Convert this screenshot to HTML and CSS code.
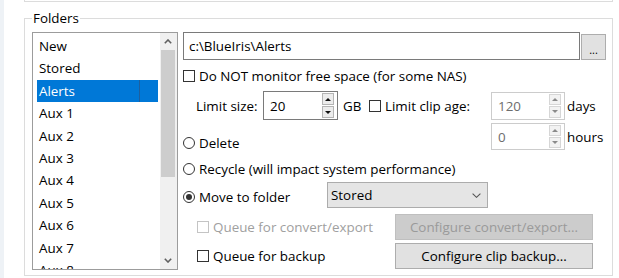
FILE: index.html
```html
<!DOCTYPE html>
<html>
<head>
<meta charset="utf-8">
<link rel="stylesheet" href="styles.css">
</head>
<body>
<div class="page">
  <div class="prev-group"></div>
  <div class="group">
    <span class="legend">Folders</span>
    <div class="group-body">
      <div class="listbox">
        <ul class="items">
          <li>New</li>
          <li>Stored</li>
          <li class="sel"><span class="sel-text">Alerts</span><span class="sel-div"></span></li>
          <li>Aux 1</li>
          <li>Aux 2</li>
          <li>Aux 3</li>
          <li>Aux 4</li>
          <li>Aux 5</li>
          <li>Aux 6</li>
          <li>Aux 7</li>
          <li>Aux 8</li>
        </ul>
        <div class="vscroll">
          <div class="sb-btn"><svg width="8" height="5" viewBox="0 0 8 5"><polyline points="0.8,4.2 4,1 7.2,4.2" fill="none" stroke="#606060" stroke-width="1.6"/></svg></div>
          <div class="sb-thumb"></div>
          <div class="sb-track"></div>
          <div class="sb-btn"><svg width="8" height="5" viewBox="0 0 8 5"><polyline points="0.8,0.8 4,4 7.2,0.8" fill="none" stroke="#606060" stroke-width="1.6"/></svg></div>
        </div>
      </div>

      <div class="panel">
        <div class="path-row">
          <div class="textbox">c:\BlueIris\Alerts</div>
          <div class="btn browse">...</div>
        </div>

        <div class="opt check-top"><span class="cb"></span><span>Do NOT monitor free space (for some NAS)</span></div>

        <div class="limits">
          <div class="limit-left">
            <span class="lbl-size">Limit size:</span>
            <div class="spin spin-size">
              <span class="val">20</span>
              <span class="spin-btns"><span class="sbtn"><span class="tri-up"></span></span><span class="sbtn"><span class="tri-dn"></span></span></span>
            </div>
            <span class="unit-gb">GB</span>
            <div class="opt"><span class="cb"></span><span>Limit clip age:</span></div>
          </div>
          <div class="spin spin-age disabled">
            <span class="val">120</span>
            <span class="spin-btns"><span class="sbtn"><span class="tri-up"></span></span><span class="sbtn"><span class="tri-dn"></span></span></span>
          </div>
          <span class="unit">days</span>

          <div class="opt delete"><span class="radio"></span><span>Delete</span></div>
          <div class="spin spin-hours disabled">
            <span class="val">0</span>
            <span class="spin-btns"><span class="sbtn"><span class="tri-up"></span></span><span class="sbtn"><span class="tri-dn"></span></span></span>
          </div>
          <span class="unit">hours</span>
        </div>

        <div class="opt recycle"><span class="radio"></span><span>Recycle (will impact system performance)</span></div>

        <div class="move-row">
          <div class="opt move-opt"><span class="radio checked"></span><span>Move to folder</span></div>
          <div class="select">
            <span>Stored</span>
            <svg width="9" height="5" viewBox="0 0 9 5"><polyline points="0.6,0.6 4.5,4.3 8.4,0.6" fill="none" stroke="#555" stroke-width="1.1"/></svg>
          </div>
        </div>

        <div class="queue-row convert">
          <div class="opt queue-opt off"><span class="cb"></span><span>Queue for convert/export</span></div>
          <div class="btn wide disabled-btn">Configure convert/export...</div>
        </div>

        <div class="queue-row backup">
          <div class="opt queue-opt"><span class="cb"></span><span>Queue for backup</span></div>
          <div class="btn wide">Configure clip backup...</div>
        </div>
      </div>
    </div>
  </div>
</div>
</body>
</html>
```

FILE: styles.css
```css
* { box-sizing: border-box; }

html, body {
  margin: 0;
  padding: 0;
  background: #ffffff;
}

body {
  width: 619px;
  height: 278px;
  overflow: hidden;
  font-family: "Open Sans", "Noto Sans", "Liberation Sans", sans-serif;
  font-size: 13.4px;
  color: #000;
}

.page {
  width: 619px;
  height: 278px;
  border-left: 4px solid #eef2f6;
}

.prev-group {
  margin-left: 20px;
  width: 589px;
  height: 2px;
  border: 1px solid #dcdcdc;
  border-top: none;
}

.group {
  position: relative;
  margin-top: 16px;
  margin-left: 20px;
  width: 589px;
  height: 258px;
  border: 1px solid #dcdcdc;
  padding: 13px 6px 0 7px;
}

.legend {
  position: absolute;
  top: -10px;
  left: 7px;
  padding: 0 1px;
  line-height: 18px;
  background: #fff;
}

.group-body {
  display: flex;
  gap: 5px;
}

/* list box */
.listbox {
  width: 146px;
  height: 238px;
  border: 1px solid #9c9c9c;
  display: flex;
  overflow: hidden;
}

.items {
  list-style: none;
  margin: 0;
  padding: 2px 2px 0 4px;
  width: 127px;
  overflow: hidden;
}

.items li {
  height: 22.4px;
  line-height: 22.4px;
  padding-left: 2px;
  white-space: nowrap;
}

.items li.sel {
  background: #0078d7;
  color: #fff;
  display: flex;
  padding-left: 0;
}

.sel-text {
  width: 102px;
  padding-left: 2px;
}

.sel-div {
  width: 1px;
  background: #1f5f9e;
}

.vscroll {
  width: 17px;
  background: #f0f0f0;
  display: flex;
  flex-direction: column;
  padding: 0 2px 0 1px;
}

.sb-btn {
  height: 17px;
  display: flex;
  align-items: center;
  justify-content: center;
}

.sb-thumb {
  height: 127px;
  background: #cdcdcd;
}

.sb-track {
  flex: 1;
}

/* right panel */
.panel {
  width: 423px;
  display: flex;
  flex-direction: column;
}

.path-row {
  display: flex;
  height: 28px;
}

.textbox {
  width: 397px;
  height: 28px;
  border: 1px solid #7a7a7a;
  padding-left: 5px;
  line-height: 26px;
}

.btn {
  background: #e1e1e1;
  border: 1px solid #adadad;
  display: flex;
  align-items: center;
  justify-content: center;
  white-space: nowrap;
}

.browse {
  margin-left: 1px;
  width: 25px;
  height: 26px;
  align-self: flex-end;
  font-size: 11px;
  padding-top: 4px;
}

.opt {
  display: flex;
  align-items: center;
  height: 16px;
  line-height: 16px;
  white-space: nowrap;
}

.cb {
  width: 12px;
  height: 12px;
  border: 1px solid #333;
  background: #fff;
  margin-right: 4px;
  flex: none;
}

.radio {
  width: 12px;
  height: 12px;
  border: 1px solid #333;
  border-radius: 50%;
  background: #fff;
  margin-right: 4px;
  flex: none;
  display: flex;
  align-items: center;
  justify-content: center;
}

.radio.checked::before {
  content: "";
  width: 6px;
  height: 6px;
  border-radius: 50%;
  background: #333;
}

.check-top {
  margin-top: 8px;
}

/* limits grid */
.limits {
  display: grid;
  grid-template-columns: 306px 74px 1fr;
  column-gap: 2px;
  row-gap: 2px;
  align-items: center;
  margin-top: 7px;
}

.limit-left {
  display: flex;
  align-items: center;
}

.lbl-size {
  width: 80px;
  padding-left: 13px;
  white-space: nowrap;
}

.spin {
  display: flex;
  border: 1px solid #7a7a7a;
  background: #fff;
}

.spin .val {
  flex: 1;
  padding-left: 6px;
  display: flex;
  align-items: center;
}

.spin-btns {
  display: flex;
  flex-direction: column;
  width: 12px;
  margin: 1px 3px 1px 0;
  gap: 1px;
}

.sbtn {
  flex: 1;
  border: 1px solid #b4b4b4;
  background: #ececec;
  display: flex;
  align-items: center;
  justify-content: center;
}

.tri-up {
  width: 0;
  height: 0;
  border-left: 3px solid transparent;
  border-right: 3px solid transparent;
  border-bottom: 3px solid #111;
}

.tri-dn {
  width: 0;
  height: 0;
  border-left: 3px solid transparent;
  border-right: 3px solid transparent;
  border-top: 3px solid #111;
}

.spin-size {
  width: 75px;
  height: 29px;
}

.unit-gb {
  width: 31px;
  padding-left: 5px;
}

.spin-age {
  height: 28px;
}

.spin-hours {
  height: 27px;
}

.spin.disabled {
  border-color: #cccccc;
  color: #6d6d6d;
}

.spin.disabled .sbtn {
  border-color: #d6d6d6;
  background: #f2f2f2;
}

.spin.disabled .tri-up { border-bottom-color: #8a8a8a; }
.spin.disabled .tri-dn { border-top-color: #8a8a8a; }

.delete {
  align-self: start;
  margin-top: 13px;
}

.recycle {
  margin-top: 10px;
}

.move-row {
  display: flex;
  align-items: center;
  margin-top: 5px;
  height: 26px;
}

.move-opt {
  width: 144px;
  padding-top: 3px;
}

.select {
  width: 161px;
  height: 26px;
  background: #e5e5e5;
  border: 1px solid #acacac;
  display: flex;
  align-items: center;
  justify-content: space-between;
  padding: 0 6px 0 3px;
}

.queue-row {
  display: flex;
  align-items: center;
  height: 26px;
}

.queue-row.convert { margin-top: 6px; }
.queue-row.backup { margin-top: 3px; }

.queue-opt {
  width: 212px;
  padding-left: 14px;
}

.queue-opt.off { color: #a0a0a0; }
.queue-opt.off .cb { border-color: #c4c4c4; }

.wide {
  width: 198px;
  height: 26px;
}

.disabled-btn {
  background: #cccccc;
  border-color: #bfbfbf;
  color: #9a9a9a;
}
```
